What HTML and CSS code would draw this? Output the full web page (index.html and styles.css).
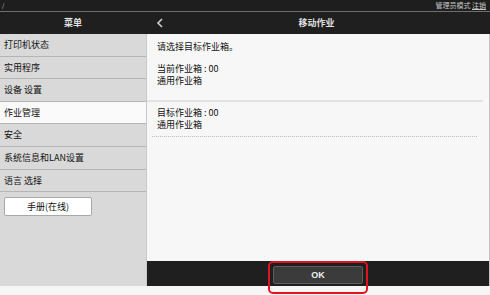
FILE: index.html
```html
<!DOCTYPE html>
<html lang="zh-CN">
<head>
<meta charset="utf-8">
<link rel="stylesheet" href="styles.css">
</head>
<body>
<div class="app">
  <div class="topbar">
    <span class="crumb">/</span>
    <span class="admin">管理员模式 <span class="logout">注销</span></span>
  </div>
  <div class="header">
    <div class="h-left">菜单</div>
    <div class="h-right">
      <svg class="back" width="8" height="10" viewBox="0 0 8 10"><path d="M6 1 L2 5 L6 9" fill="none" stroke="#d0d0d0" stroke-width="1.6"/></svg>
      <span class="title">移动作业</span>
    </div>
  </div>
  <div class="main">
    <nav class="sidebar">
      <div class="item">打印机状态</div>
      <div class="item">实用程序</div>
      <div class="item">设备 设置</div>
      <div class="item active">作业管理</div>
      <div class="item">安全</div>
      <div class="item">系统信息和LAN设置</div>
      <div class="item">语言 选择</div>
      <div class="manual-wrap"><div class="manual">手册(在线)</div></div>
    </nav>
    <section class="content">
      <div class="scroll">
        <p class="prompt">请选择目标作业箱。</p>
        <div class="block first">
          <div>当前作业箱 : 00</div>
          <div>通用作业箱</div>
        </div>
        <div class="block second">
          <div>目标作业箱 : 00</div>
          <div>通用作业箱</div>
        </div>
      </div>
      <div class="footer">
        <div class="ok">OK<span class="highlight"></span></div>
      </div>
    </section>
  </div>
</div>
</body>
</html>
```
FILE: styles.css
```css
* { box-sizing: border-box; }
html, body { margin: 0; padding: 0; }
body {
  width: 490px;
  height: 295px;
  background: #f6f6f6;
  font-family: "Noto Sans CJK SC", "Noto Sans", sans-serif;
  font-size: 9px;
  color: #111;
  overflow: hidden;
}
.app { width: 490px; height: 286px; display: flex; flex-direction: column; }
.topbar {
  height: 12px;
  background: #1e1e1e;
  border-bottom: 1px solid #6e6e6e;
  display: flex;
  justify-content: space-between;
  align-items: center;
  padding: 0 4px 0 2px;
  color: #c8c8c8;
  font-size: 7px;
  line-height: 11px;
}
.crumb { font-size: 6px; }
.logout { text-decoration: underline; }
.header {
  height: 22px;
  background: #1f1f1f;
  display: flex;
  color: #e0e0e0;
  font-weight: bold;
  line-height: 22px;
}
.h-left { width: 146px; text-align: center; }
.h-right { flex: 1; position: relative; text-align: center; }
.back { position: absolute; left: 10px; top: 6px; }
.title { margin-left: -3px; }
.main { flex: 1; display: flex; min-height: 0; }
.sidebar {
  width: 146px;
  background: #d9d9d9;
  display: flex;
  flex-direction: column;
}
.item {
  height: 22.6px;
  line-height: 21.6px;
  padding-left: 4px;
  border-bottom: 1px solid #b5b5b5;
}
.item.active { background: #fafafa; }
.manual-wrap { padding: 5px 0 0 4px; }
.manual {
  width: 88px;
  height: 19px;
  line-height: 17px;
  text-align: center;
  background: #fff;
  border: 1px solid #a8a8a8;
  border-radius: 2px;
}
.content {
  flex: 1;
  display: flex;
  flex-direction: column;
  background: #f7f7f7;
  border-left: 1px solid #c8c8c8;
  border-right: 1px solid #c4c4c4;
}
.scroll { flex: 1; padding-left: 10px; line-height: 12px; }
.prompt { margin: 0; padding-top: 6.5px; }
.block.first { padding: 10.5px 0 13px; margin-left: -10px; padding-left: 10px; border-bottom: 2px solid #e2e2e2; margin-right: 6px; }
.block.second { padding: 5px 0 5px; margin-left: -5px; padding-left: 5px; margin-right: 12px; border-bottom: 1px dotted #bdbdbd; }
.footer {
  height: 25px;
  background: #1f1f1f;
  display: flex;
  justify-content: center;
  padding-top: 4.5px;
}
.ok {
  position: relative;
  width: 90px;
  height: 18px;
  background: #3b3b3b;
  border: 1px solid #5e5e5e;
  border-radius: 2px;
  color: #f0f0f0;
  font-weight: bold;
  text-align: center;
  line-height: 16px;
  font-family: "Liberation Sans", "Noto Sans", sans-serif;
}
.highlight {
  position: absolute;
  left: -6px;
  top: -6px;
  width: 100px;
  height: 33px;
  border: 2px solid #e0141e;
  border-radius: 5px;
}
```
